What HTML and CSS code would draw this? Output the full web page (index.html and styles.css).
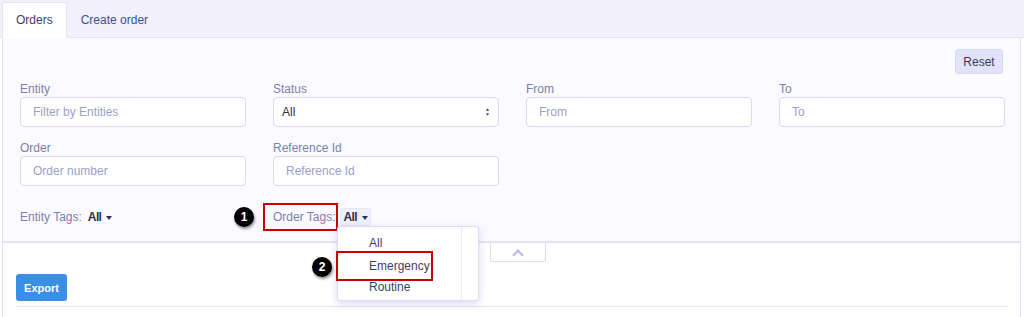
FILE: index.html
```html
<!DOCTYPE html>
<html lang="en">
<head>
  <meta charset="UTF-8">
  <title>Orders</title>
  <link rel="stylesheet" href="styles.css">
</head>
<body>
  <div class="tabs">
    <a class="tab active">Orders</a>
    <a class="tab">Create order</a>
  </div>

  <div class="panel">
    <div class="filters">
      <div class="toolbar">
        <button class="btn-reset">Reset</button>
      </div>

      <div class="grid">
        <div class="field">
          <label>Entity</label>
          <input type="text" placeholder="Filter by Entities">
        </div>
        <div class="field">
          <label>Status</label>
          <div class="select">All<span class="arrows">&#9650;<br>&#9660;</span></div>
        </div>
        <div class="field">
          <label>From</label>
          <input type="text" placeholder="From">
        </div>
        <div class="field">
          <label>To</label>
          <input type="text" placeholder="To">
        </div>
        <div class="field">
          <label>Order</label>
          <input type="text" placeholder="Order number">
        </div>
        <div class="field">
          <label>Reference Id</label>
          <input type="text" placeholder="Reference Id">
        </div>
      </div>

      <div class="grid tags">
        <div class="tag">
          <span class="tag-label">Entity Tags:</span>
          <span class="tag-value">All <span class="caret"></span></span>
        </div>
        <div class="tag">
          <span class="tag-label marked">Order Tags:
            <span class="step step-1">1</span>
          </span>
          <span class="tag-value open">All <span class="caret"></span></span>
          <ul class="menu">
            <li>All</li>
            <li class="marked-item">Emergency<span class="step step-2">2</span></li>
            <li>Routine</li>
          </ul>
        </div>
      </div>
    </div>

    <div class="collapse">
      <span class="chevron"></span>
    </div>

    <div class="results">
      <button class="btn-export">Export</button>
      <div class="rule"></div>
    </div>
  </div>
</body>
</html>
```

FILE: styles.css
```css
body {
  margin: 0;
  font-family: 'Liberation Sans', Arial, sans-serif;
  font-size: 12px;
  color: #3c3f66;
  background: #fff;
}

.tabs {
  height: 38px;
  background: #f1f0fc;
  display: flex;
  align-items: flex-end;
  padding-left: 2px;
  border-bottom: 1px solid #e6e5f6;
  box-sizing: border-box;
}

.tab {
  height: 34px;
  line-height: 34px;
  padding: 0 13px;
  color: #3f4f92;
  margin-right: 1px;
}

.tab.active {
  background: #fff;
  color: #3c3f66;
  border: 1px solid #e6e5f6;
  border-bottom: none;
  border-radius: 3px 3px 0 0;
  margin-bottom: -1px;
  height: 35px;
}

.panel {
  margin: 0 3px 0 2px;
  border-left: 1px solid #e4e3f6;
  border-right: 1px solid #e4e3f6;
  height: 279px;
}

.filters {
  background: #fbfaff;
  padding: 11px 17px 0 17px;
  height: 192px;
  border-bottom: 2px solid #e2e1f5;
}

.toolbar {
  display: flex;
  justify-content: flex-end;
  height: 25px;
  margin-bottom: 8px;
}

.btn-reset {
  width: 48px;
  height: 25px;
  background: #e2e3f8;
  border: 1px solid #d8d9f2;
  border-radius: 3px;
  font-family: inherit;
  font-size: 12px;
  color: #363a5c;
  padding: 0;
}

.grid {
  display: grid;
  grid-template-columns: repeat(4, 226px);
  column-gap: 27px;
  row-gap: 14px;
}

.field label {
  display: block;
  line-height: 15px;
  color: #7c80ab;
}

.field input,
.select {
  display: block;
  width: 226px;
  height: 30px;
  box-sizing: border-box;
  border: 1px solid #d9d9f1;
  border-radius: 4px;
  background: #fff;
  padding: 0 12px;
  font-family: inherit;
  font-size: 12px;
  color: #3c3f66;
  margin: 0;
}

.field input::placeholder {
  color: #9aa0c9;
}

.select {
  display: flex;
  align-items: center;
  justify-content: space-between;
  padding: 0 8px;
  color: #2d3050;
}

.arrows {
  font-size: 5px;
  line-height: 5px;
  color: #555;
  text-align: center;
}

.tags {
  margin-top: 19px;
  height: 24px;
  align-items: center;
}

.tag {
  position: relative;
  display: flex;
  align-items: center;
  gap: 4px;
  line-height: 20px;
}

.tag-label {
  color: #7c80ab;
}

.tag-value {
  color: #2d3050;
  font-weight: bold;
  letter-spacing: -0.6px;
  padding: 0 2px;
}

.tag-value.open {
  background: #f0f0fb;
  border: 1px solid #e6e6f6;
  border-radius: 2px;
  line-height: 16px;
}

.caret {
  display: inline-block;
  width: 0;
  height: 0;
  border-left: 3px solid transparent;
  border-right: 3px solid transparent;
  border-top: 4px solid #2d3050;
  vertical-align: middle;
  margin-left: 2px;
}

.marked {
  position: relative;
  outline: 2px solid #cc0000;
  padding: 2px 1px 2px 8px;
  margin-left: -8px;
}

.step {
  position: absolute;
  width: 20px;
  height: 20px;
  border-radius: 50%;
  background: #000;
  color: #fff;
  font-weight: bold;
  font-size: 12px;
  line-height: 20px;
  text-align: center;
  box-shadow: 1px 2px 3px rgba(0, 0, 0, 0.45);
}

.step-1 {
  left: -31px;
  top: 2px;
}

.step-2 {
  left: -26px;
  top: 4px;
}

.menu {
  position: absolute;
  left: 64px;
  top: 21px;
  width: 142px;
  height: 75px;
  box-sizing: border-box;
  margin: 0;
  padding: 6px 0 0 0;
  list-style: none;
  background: #fff;
  border: 1px solid #dcdcf3;
  border-radius: 3px;
  box-shadow: 0 3px 8px rgba(150, 150, 220, 0.35);
  z-index: 2;
}

.menu::after {
  content: "";
  position: absolute;
  right: 16px;
  top: 0;
  bottom: 0;
  border-left: 1px solid #ececf7;
}

.menu li {
  line-height: 21.5px;
  padding-left: 31px;
  color: #3c3f66;
}

.marked-item {
  position: relative;
  outline: 2px solid #cc0000;
  margin-right: 47px;
  height: 26px;
  line-height: 26px !important;
  margin-top: -2px;
  margin-bottom: -2px;
}

.collapse {
  width: 54px;
  height: 18px;
  margin-left: 487px;
  border: 1px solid #dcdcf2;
  border-top: none;
  border-radius: 0 0 3px 3px;
  display: flex;
  align-items: center;
  justify-content: center;
}

.chevron {
  width: 6px;
  height: 6px;
  border-left: 2px solid #b4b6de;
  border-top: 2px solid #b4b6de;
  transform: rotate(45deg);
  margin-top: 5px;
}

.results {
  padding: 12px 12px 0 13px;
}

.btn-export {
  width: 51px;
  height: 27px;
  background: #3a8ee6;
  border: none;
  border-radius: 3px;
  color: #fff;
  font-family: inherit;
  font-size: 11px;
  font-weight: bold;
  padding: 0;
}

.rule {
  margin-top: 5px;
  border-top: 1px solid #e4e4f4;
}
```
